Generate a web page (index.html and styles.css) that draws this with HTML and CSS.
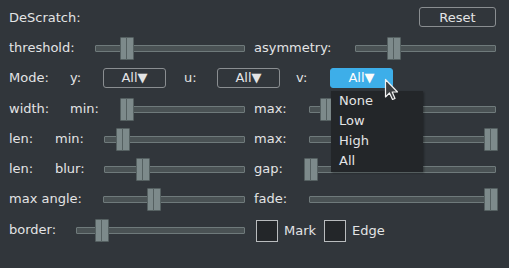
FILE: index.html
```html
<!DOCTYPE html>
<html lang="en">
<head>
  <meta charset="UTF-8" />
  <title>DeScratch</title>
  <link rel="stylesheet" href="styles.css">
</head>
<body>

  <div class="panel">
    <div class="row">
      <span class="label">DeScratch:</span>
      <button class="btn-reset">Reset</button>
    </div>

    <div class="row split">
      <div class="half">
        <span class="label w-86">threshold:</span>
        <div class="slider"><span class="handle" style="--pos:0.18"></span></div>
      </div>
      <div class="half">
        <span class="label w-101">asymmetry:</span>
        <div class="slider"><span class="handle" style="--pos:0.25"></span></div>
      </div>
    </div>

    <div class="row">
      <span class="label w-61">Mode:</span>
      <span class="label w-33">y:</span>
      <span class="combo">All▼</span>
      <span class="label w-33 ml-18">u:</span>
      <span class="combo">All▼</span>
      <span class="label w-34 ml-16">v:</span>
      <span class="combo active">All▼</span>
    </div>

    <div class="row split">
      <div class="half">
        <span class="label w-61">width:</span>
        <span class="label w-50">min:</span>
        <div class="slider"><span class="handle" style="--pos:0"></span></div>
      </div>
      <div class="half">
        <span class="label w-55">max:</span>
        <div class="slider"><span class="handle" style="--pos:0.063"></span></div>
      </div>
    </div>

    <div class="row split">
      <div class="half">
        <span class="label w-46">len:</span>
        <span class="label w-49">min:</span>
        <div class="slider"><span class="handle" style="--pos:0.093"></span></div>
      </div>
      <div class="half">
        <span class="label w-55">max:</span>
        <div class="slider"><span class="handle" style="--pos:1"></span></div>
      </div>
    </div>

    <div class="row split">
      <div class="half">
        <span class="label w-46">len:</span>
        <span class="label w-49">blur:</span>
        <div class="slider"><span class="handle" style="--pos:0.245"></span></div>
      </div>
      <div class="half">
        <span class="label w-50">gap:</span>
        <div class="slider"><span class="handle" style="--pos:0"></span></div>
      </div>
    </div>

    <div class="row split">
      <div class="half">
        <span class="label w-94">max angle:</span>
        <div class="slider"><span class="handle" style="--pos:0.338"></span></div>
      </div>
      <div class="half">
        <span class="label w-55">fade:</span>
        <div class="slider"><span class="handle" style="--pos:1"></span></div>
      </div>
    </div>

    <div class="row split">
      <div class="half">
        <span class="label w-67">border:</span>
        <div class="slider"><span class="handle" style="--pos:0.121"></span></div>
      </div>
      <div class="half checks">
        <span class="check"><span class="box"></span>Mark</span>
        <span class="check"><span class="box"></span>Edge</span>
      </div>
    </div>
  </div>

  <ul class="popup">
    <li>None</li>
    <li>Low</li>
    <li>High</li>
    <li>All</li>
  </ul>

  <svg class="cursor" width="16" height="24" viewBox="0 0 16 24">
    <path d="M1.5 1.5 L1.5 19 L5.5 15 L8.5 21.5 L11 20.5 L8.2 14 L13.5 14 Z" fill="#3b3e41" stroke="#f2f2f2" stroke-width="1.2" stroke-linejoin="round"/>
  </svg>

</body>
</html>
```

FILE: styles.css
```css
* {
  margin: 0;
  padding: 0;
  box-sizing: border-box;
}

body {
  font-family: 'DejaVu Sans', sans-serif;
  font-size: 13px;
  background-color: #31363b;
  color: #e3e4e5;
  width: 509px;
  height: 268px;
  overflow: hidden;
  position: relative;
}

.panel {
  display: flex;
  flex-direction: column;
  padding: 2px 13px 0 9px;
}

.row {
  display: flex;
  align-items: center;
  height: 30.3px;
}

.row.split {
  display: grid;
  grid-template-columns: 236px 1fr;
  column-gap: 9px;
}

.half {
  display: flex;
  align-items: center;
  height: 100%;
}

.label {
  white-space: nowrap;
  flex-shrink: 0;
}

.w-33 { width: 33px; }
.w-34 { width: 34px; }
.w-46 { width: 46px; }
.w-49 { width: 49px; }
.w-50 { width: 50px; }
.w-55 { width: 55px; }
.w-61 { width: 61px; }
.w-67 { width: 67px; }
.w-86 { width: 86px; }
.w-94 { width: 94px; }
.w-101 { width: 101px; }
.ml-16 { margin-left: 16px; }
.ml-18 { margin-left: 18px; }

.btn-reset {
  margin-left: auto;
  width: 77px;
  height: 20px;
  background: transparent;
  border: 1px solid #8a8e91;
  border-radius: 3px;
  color: #e3e4e5;
  font-family: inherit;
  font-size: 13px;
}

.slider {
  flex: 1;
  position: relative;
  height: 21px;
}

.slider::before {
  content: "";
  position: absolute;
  left: 0;
  right: 0;
  top: 8px;
  height: 5px;
  background: #4a5254;
  border: 1px solid #6f7a7b;
  border-radius: 1px;
}

.handle {
  position: absolute;
  top: 0;
  left: calc(var(--pos) * (100% - 12px));
  width: 12px;
  height: 21px;
}

.handle::before,
.handle::after {
  content: "";
  position: absolute;
  top: 0;
  width: 6px;
  height: 21px;
  background: #7d8a8b;
  border: 1px solid #556061;
  border-radius: 1px;
}

.handle::before { left: 0; }
.handle::after { left: 6px; }

.combo {
  width: 63px;
  height: 20px;
  border: 1px solid #8a8e91;
  border-radius: 3px;
  text-align: center;
  line-height: 18px;
  flex-shrink: 0;
}

.combo.active {
  background: #3daee9;
  border-color: #3daee9;
  color: #fcfcfc;
}

.checks {
  gap: 8px;
  padding-top: 3px;
}

.check {
  display: flex;
  align-items: center;
  gap: 6px;
}

.check:first-child {
  margin-left: 2px;
}

.box {
  width: 22px;
  height: 22px;
  background: #232629;
  border: 1px solid #b9bcbe;
}

.popup {
  position: absolute;
  left: 331px;
  top: 91px;
  width: 92px;
  height: 81px;
  list-style: none;
  background: #232629;
  padding: 0 0 0 8px;
  box-shadow: 1px 1px 2px rgba(0, 0, 0, 0.35);
}

.popup li {
  height: 20px;
  line-height: 20px;
}

.cursor {
  position: absolute;
  left: 384px;
  top: 78px;
}
```
